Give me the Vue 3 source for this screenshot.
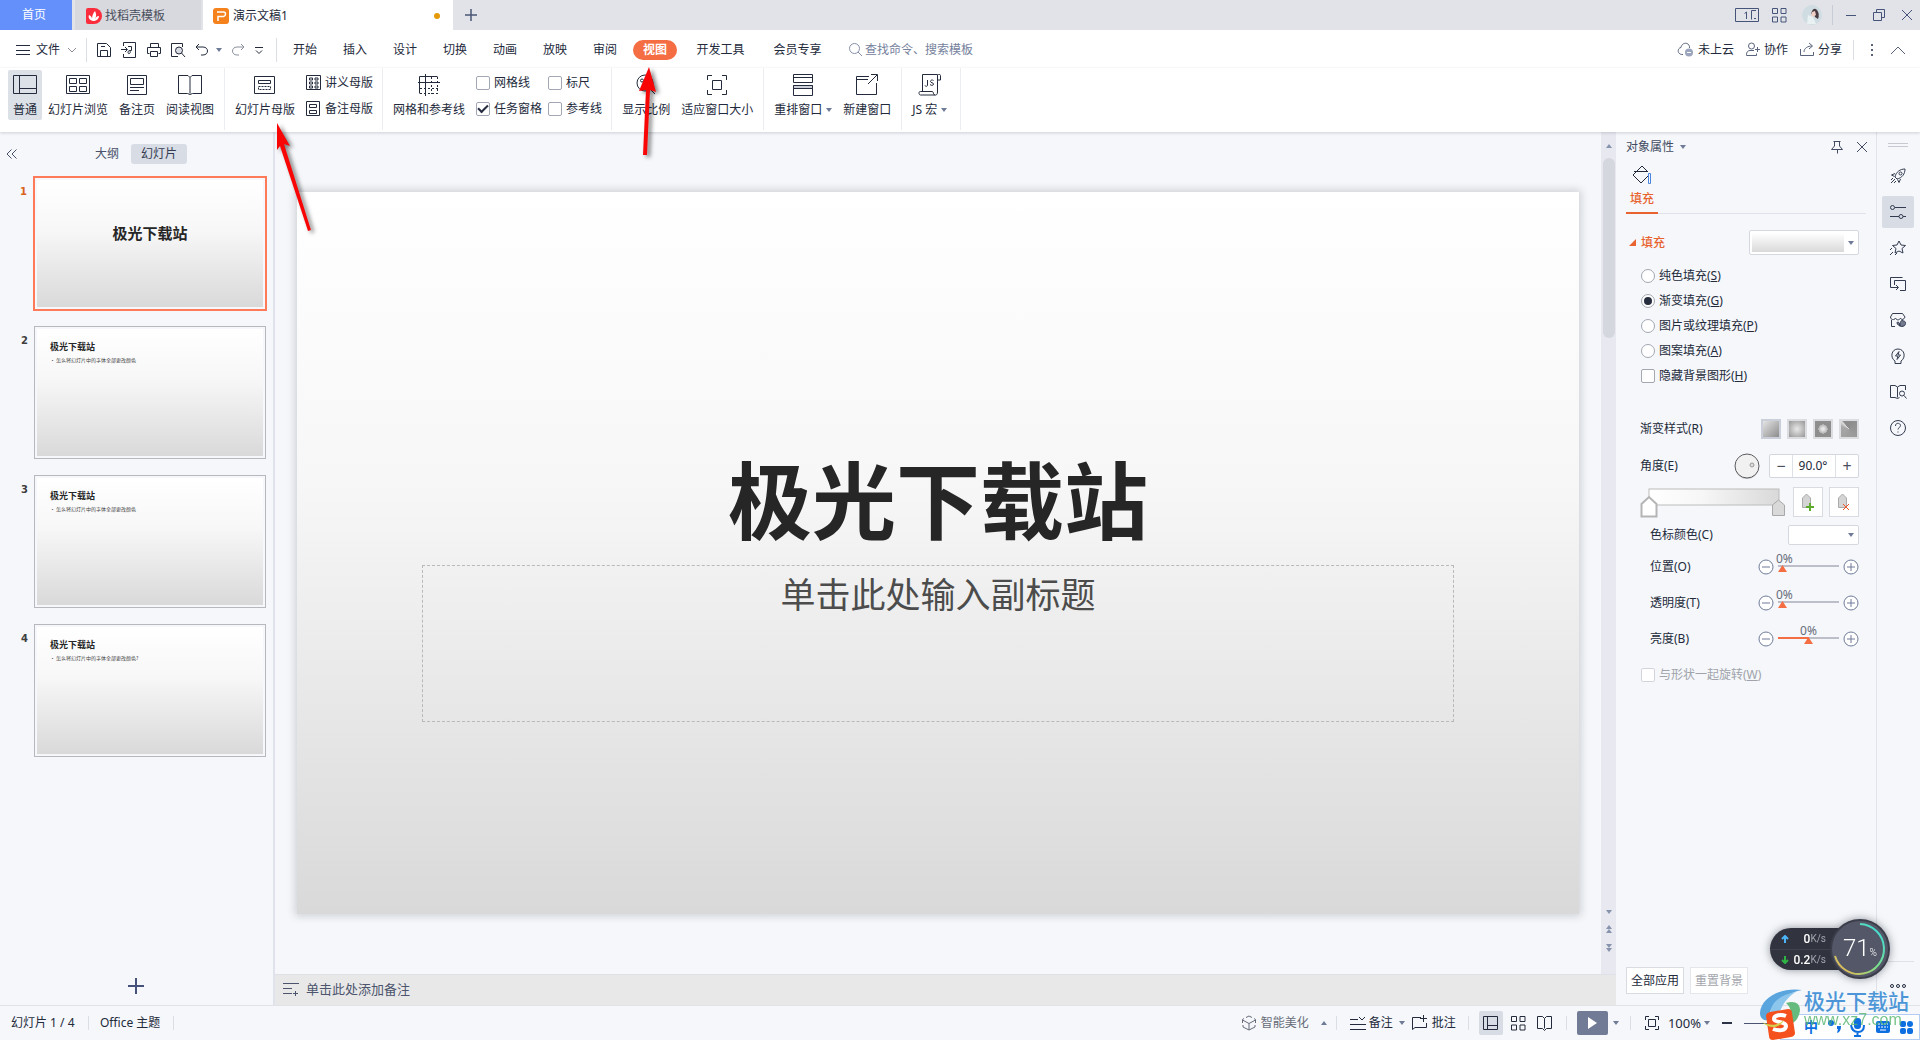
<script setup>
import { h, ref } from 'vue'

const shapes = {
  menu: [16, 12, '<path d="M1 1.5h14M1 6.5h14M1 10.5h14"/>'],
  chevron: [10, 8, '<path d="M1 2l4 4 4-4"/>'],
  save: [16, 16, '<path d="M1.500 1.500h9l4 4v9h-13zM4.500 14V8.500h7V14M5 4.500h4"/>'],
  exportPdf: [18, 16, '<path d="M3.500 4V.5h12v15h-12V12M1 7.500h6M5 5l2.500 2.500L5 10M8 4.500h3.500v4H9.500c-2 0-2 4 0 3 1-.5 1-2 0-3"/>'],
  print: [16, 16, '<path d="M4.500 5V1.500h8V5M3.500 11.500h-2v-6h13v6h-2M4.500 9.500h7v5h-7z"/>'],
  preview: [16, 16, '<path d="M8 14.500H1.500v-13h11V5"/><circle cx="9" cy="8.500" r="3.500" fill="#d9dce3"/><path d="M11.500 11l3.500 4"/>'],
  undo: [16, 14, '<path d="M5 1L2 4l3 3M2 4h7c6 0 6 8 0 8H7"/>'],
  redo: [16, 14, '<path d="M11 1l3 3-3 3M14 4H7C1 4 1 12 7 12h2"/>'],
  more: [10, 10, '<path d="M1 2.500h8M2 5.500l3 3 3-3"/>'],
  search: [15, 15, '<circle cx="6.500" cy="6.500" r="5"/><path d="M10 10l4 4"/>'],
  normal: [24, 20, '<path d="M.5.5h23v18H.5zM6.500.5v18M6.500 13.500h17"/>'],
  sorter: [24, 20, '<path d="M.5.5h23v18H.5zM3.500 3.500h7v5h-7zM13.500 3.500h7v5h-7zM3.500 11.500h7v5h-7zM13.500 11.500h7v5h-7z"/>'],
  notesPage: [20, 20, '<path d="M.5.5h19v19H.5zM3.500 3.500h13v6h-13zM3 12.500h14M3 15.500h9"/>'],
  reading: [24, 20, '<path d="M12 18.500V2.500L10 .5H.5v18h9l2.500 1 2.500-1h9V.5H14l-2 2"/>'],
  master: [22, 20, '<path d="M.5 1.500h20v17H.5zM4.500 5.500h12v3h-12z"/><path stroke-dasharray="2 1" d="M4.500 11.500h12v3h-12z"/>'],
  handout: [16, 16, '<path d="M.5.5h14v14H.5zM3.500 3h3v2h-3zM9 3h3v2H9zM3.500 7h3v2h-3zM9 7h3v2H9zM3.500 11h3v2h-3zM9 11h3v2H9z"/>'],
  notesMaster: [16, 16, '<path d="M.5.5h13v14H.5zM3.500 3.500h7v3h-7zM3.500 9.500h7v3h-7z"/>'],
  grid: [24, 22, '<path d="M1 8.500h22M8.500 0v22M2.500 19.500v-17h18"/><path stroke-dasharray="2 2" d="M14.500 3v17M20.500 3v17M3 14.500h18M3 19.500h18"/>'],
  zoom: [22, 22, '<circle cx="10" cy="9" r="8"/><path d="M15 15l5 5M13 5L7 13"/><circle cx="7" cy="6.500" r="1.500"/><circle cx="13" cy="11.500" r="1.500"/>'],
  fit: [20, 20, '<path d="M.5 5V.5H5M15 .5h4.500V5M19.500 15v4.500H15M5 19.500H.5V15M5.500 5.500h9v9h-9z"/>'],
  arrange: [22, 22, '<path d="M1.500.5h19v8h-19zM1.500 3.500h19M1.500 11.500h19v10h-19z"/><path fill="#ccd0d8" d="M1.500 11.500h19v3h-19z"/>'],
  newWin: [22, 22, '<path d="M13 2.500H.5v18h20V9M1 5.500h11M12 10l9-9M15 .5h6.500V7"/>'],
  js: [24, 22, '<path d="M4.500 17V.5h15a2 2 0 013 1V6h-3M19.500 1v17c0 4-3 3-3 3h-14c-2 0-2-4 0-3.500h12c1 0 .5 3.500 2.500 3.500M9.500 6v5.500c0 1-2.500 1-2.500 0M15.500 6.500c-1-1-3-.5-3 1s3 1 3 2.500-2 2-3.500.5"/>'],
  boxes: [24, 14, '<path d="M.5.5h23v13H.5z"/><path d="M11.500 11V4L9.500 5.500M21 2.500h-4.500v9M19 10.500h2"/>'],
  apps: [15, 15, '<path d="M.5.5h5v5h-5zM9 .5h5v5H9zM.5 9h5v5h-5zM9 9h5v5H9z"/>'],
  minimize: [12, 12, '<path d="M1 6.500h10"/>'],
  restore: [14, 14, '<path d="M1.500 4.500h8v8h-8zM4.500 4V1.500h8v8H10"/>'],
  close: [12, 12, '<path d="M1 1l10 10M11 1L1 11"/>'],
  cloud: [18, 16, '<path d="M6 12.500C0 13 0 6 4 5.500 5-.5 13 0 12.500 6"/><circle cx="12" cy="10.500" r="4" fill="#9aa5bd" stroke="none"/><path stroke="#fff" d="M10 10.500h4"/>'],
  collab: [16, 15, '<circle cx="6.500" cy="4" r="3"/><path d="M9 8.500H5c-4 0-3.500 5-3.500 5h10v-2M12.500 5v5M10 7.500h5"/>'],
  share: [16, 15, '<path d="M1.500 7v6.500h13V10M5 10c0-4 4-6 8-6M10 1l3.500 3L10 7"/>'],
  up: [16, 10, '<path d="M1 9l7-7 7 7"/>'],
  pin: [14, 14, '<path d="M3.500 1.500h7M4.500 2v4L1.500 9.500h11L9.500 6V2M7.500 10v3.500"/>'],
  bucket: [20, 20, '<path d="M10 1L1 10l8 8 7-7M10 1l6 6M2 6.500h13"/><path stroke="#4a84dc" d="M16.500 8.500h2v10h-2z"/>'],
  collapse: [12, 12, '<path d="M5.500 1.500L1 6l4.500 4.500M10.500 1.500L6 6l4.500 4.500"/>'],
  rocket: [16, 16, '<path d="M5 9C6 4 10 1 15 1c0 5-3 9-8 10zM5 5.500L1.500 7l3 1.500M10.500 11L9 14.500l-1.500-3M1 12l2-2M1 15l4-4M4 15l2-2"/><circle cx="10.500" cy="5.500" r="1.500"/>'],
  sliders: [18, 14, '<path d="M6 2.500h11M1 11.500h9M14 11.500h3"/><circle cx="3.500" cy="2.500" r="2"/><circle cx="12" cy="11.500" r="2"/>'],
  star: [18, 16, '<path d="M10 1l2 4 4.500.5-3.500 3 1 4.500-4-2-4 2 1-4.500-3.500-3L8 5zM1 10l2-2M1 15l3-3M6 15l2-2"/>'],
  swap: [18, 16, '<path d="M4 11.500H1.500v-10h12M5.500 9V4.500h11v10H11M3 11.500h6M7 9l2.500 2.500L7 14"/>'],
  shop: [18, 16, '<path d="M6 14.500H2.500V8M1.500 5l2-3.500h10L16 5c-1 3-4 3-4.500 1-1 2.500-4 2.500-5 0-1 2.500-5 2-5-1z"/><path d="M8 11c0-2 3-1 3 3 0-4 1-6 3-6-1 2 3 0 2.500 3.500 0 4-7 4-8.500-.5z" fill="#727b90"/>'],
  bulb: [16, 17, '<path d="M5 13C0 10 1 1 8 1s8 9 3 12v2.500H5zM9 3.500L5.500 8H8l-1 3.500L10.500 7H8z"/>'],
  lookup: [18, 16, '<path d="M8.500 13.500V3L6 1.500H1.500v12H6l2.500 1 2-1M8.500 3L11 1.500h5.500V6"/><circle cx="13" cy="9.500" r="2.500"/><path d="M15 11.500l2.500 3"/>'],
  help: [18, 18, '<circle cx="9" cy="9" r="7.500"/><path d="M6.500 7c0-4 5-3 5-.5 0 2-2.500 2-2.500 4M9 12.500v1"/>'],
  dots: [18, 6, '<circle cx="3" cy="3" r="1.500"/><circle cx="9" cy="3" r="1.500"/><circle cx="15" cy="3" r="1.500"/>'],
  addNote: [18, 14, '<path d="M1 1.500h16M1 6.500h9M1 11.500h9M13.500 9v5M11 11.500h5"/>'],
  cube: [16, 16, '<path d="M8 1L5 2.500M11 2.500L8 1M1.500 8V4.500L3 3.500M14.500 8V4.500L13 3.500M1.500 5L8 8.500 14.500 5M8 8.500V15l-6-3v-2M8 15l6-3v-2"/>'],
  notes: [18, 14, '<path d="M1 3.500h8M1 8.500h16M1 13.500h16M10 1l3 3 3-3"/>'],
  comment: [17, 16, '<path d="M10 2.500H1.500v12L4 12.500h11.500V8M12.500 0v7M9 3.500h7"/>'],
  vNormal: [16, 14, '<path d="M.5.5h14v13H.5zM4.500.5v13M4.500 9.500h10"/>'],
  vBook: [16, 15, '<path d="M7.500 12.500V2.500L5.500.5h-5v12h5l2 2 2-2h5V.5h-5l-2 2"/>'],
  vFit: [15, 15, '<path d="M.5 4V.5H4M10 .5h3.500V4M13.500 10v3.500H10M4 13.500H.5V10M3.500 3.500h7v7h-7z"/>'],
  add: [16, 16, '<path stroke-width="2" d="M0 8h16M8 0v16"/>'],
  stopAdd: [14, 18, '<path fill="#d4d4d4" stroke="#aaa" d="M1.500 14.500V5L5.500 1l4 4v9.500z"/><path stroke="#5cab2c" stroke-width="2" d="M5 14h8M9 10v8"/>'],
  stopDel: [14, 18, '<path fill="#d4d4d4" stroke="#aaa" d="M1.500 14.500V5L5.500 1l4 4v9.500z"/><path stroke="#f0562c" d="M6 11l6 6M12 11l-6 6"/>'],
  leaf: [16, 16, '<path fill="#fb2c3c" stroke="none" d="M0 2q0-2 2-2h6a8 8 0 010 16H2q-2 0-2-2z"/><path fill="#fff" stroke="none" d="M7 13C3 12 2 9 3 7c2 1 3 2 3 4C6 8 7 5 9 3c2 4 1 6 0 8 1-2 2-3 4-3 0 3-3 5-6 5z"/>'],
  ppt: [16, 16, '<rect width="16" height="16" rx="3" fill="#f5821c" stroke="none"/><path stroke="#fff" stroke-width="1.500" d="M4 4h6.500q2 0 2 2t-2 2.500H5V13"/>'],
}

const Ico = (props) => {
  const [w, ht, body] = shapes[props.n]
  return h('svg', { width: w, height: ht, viewBox: `0 0 ${w} ${ht}`, fill: 'none', stroke: 'currentColor', 'aria-hidden': 'true', innerHTML: body })
}
Ico.props = ['n']

const tabsA = ['开始', '插入', '设计', '切换', '动画', '放映', '审阅', '视图']
const tabsB = ['开发工具', '会员专享']
const quick = ['save', 'exportPdf', 'print', 'preview']
const views = [['normal', '普通'], ['sorter', '幻灯片浏览'], ['notesPage', '备注页'], ['reading', '阅读视图']]
const shows = ref([
  { t: '网格线', on: false }, { t: '标尺', on: false },
  { t: '任务窗格', on: true }, { t: '参考线', on: false },
])
const slides = [
  { title: '极光下载站', cover: true },
  { title: '极光下载站', body: '怎么将幻灯片中的字体全部更改颜色' },
  { title: '极光下载站', body: '怎么将幻灯片中的字体全部更改颜色' },
  { title: '极光下载站', body: '怎么将幻灯片中的字体全部更改颜色?' },
]
const fills = [['纯色填充', 'S'], ['渐变填充', 'G'], ['图片或纹理填充', 'P'], ['图案填充', 'A']]
const fill = ref('G')
const sliders = ref([
  { id: 'pos', t: '位置(O)', v: 0, min: 0 },
  { id: 'alpha', t: '透明度(T)', v: 0, min: 0 },
  { id: 'light', t: '亮度(B)', v: 0, min: -100 },
])
const tools = ['rocket', 'sliders', 'star', 'swap', 'shop', 'bulb', 'lookup', 'help']
</script>

<template>
  <div class="app">
    <header class="titlebar">
      <button class="home">首页</button>
      <button class="doc doc-store"><Ico n="leaf" />找稻壳模板</button>
      <button class="doc doc-active"><Ico n="ppt" />演示文稿1<i class="unsaved"></i></button>
      <button class="newtab" aria-label="新建"><Ico n="add" /></button>
      <div class="win">
        <button><Ico n="boxes" /></button>
        <button><Ico n="apps" /></button>
        <svg class="avatar" width="20" height="20" viewBox="0 0 20 20"><circle cx="10" cy="10" r="10" fill="#cfdde2" /><path d="M10 6q2-4 5-1 3 4 1 9l-3-2-1-3-3 0z" fill="#4a3a42" /><path d="M10 7l3-1 1 4-3 2-2-2z" fill="#f0cfc6" /><path d="M6 10l5 2 3 7H5z" fill="#e9f1f3" /></svg>
        <i class="vline"></i>
        <button><Ico n="minimize" /></button>
        <button><Ico n="restore" /></button>
        <button><Ico n="close" /></button>
      </div>
    </header>

    <nav class="menubar">
      <button class="file"><Ico n="menu" />文件<Ico n="chevron" class="muted" /></button>
      <i class="vline"></i>
      <div class="quick">
        <button v-for="q in quick" :key="q"><Ico :n="q" /></button>
        <button class="undo"><Ico n="undo" /><i class="caret"></i></button>
        <button class="muted"><Ico n="redo" /></button>
        <button><Ico n="more" /></button>
      </div>
      <i class="vline"></i>
      <div class="tabs">
        <button v-for="t in tabsA" :key="t" class="tab" :class="{ current: t === '视图' }"><span>{{ t }}</span></button>
        <button v-for="t in tabsB" :key="t" class="tab wide"><span>{{ t }}</span></button>
      </div>
      <label class="search"><Ico n="search" /><input type="text" placeholder="查找命令、搜索模板" aria-label="查找命令" /></label>
      <div class="account">
        <button><Ico n="cloud" />未上云</button>
        <button><Ico n="collab" />协作</button>
        <button><Ico n="share" />分享</button>
        <i class="vline"></i>
        <button class="kebab" aria-label="更多"><i></i><i></i><i></i></button>
        <button class="muted"><Ico n="up" /></button>
      </div>
    </nav>

    <section class="ribbon">
      <div class="group first">
        <button v-for="([i, t], k) in views" :key="t" class="big" :class="{ pressed: k === 0 }"><Ico :n="i" /><span>{{ t }}</span></button>
      </div>
      <div class="group">
        <button class="big"><Ico n="master" /><span>幻灯片母版</span></button>
        <div class="stack">
          <button><Ico n="handout" />讲义母版</button>
          <button><Ico n="notesMaster" />备注母版</button>
        </div>
      </div>
      <div class="group">
        <button class="big"><Ico n="grid" /><span>网格和参考线</span></button>
        <div class="checks">
          <label v-for="s in shows" :key="s.t"><input v-model="s.on" type="checkbox" />{{ s.t }}</label>
        </div>
      </div>
      <div class="group">
        <button class="big"><Ico n="zoom" /><span>显示比例</span></button>
        <button class="big"><Ico n="fit" /><span>适应窗口大小</span></button>
      </div>
      <div class="group">
        <button class="big"><Ico n="arrange" /><span>重排窗口<i class="caret"></i></span></button>
        <button class="big"><Ico n="newWin" /><span>新建窗口</span></button>
      </div>
      <div class="group last">
        <button class="big"><Ico n="js" /><span>JS 宏<i class="caret"></i></span></button>
      </div>
    </section>

    <main class="work">
      <aside class="outline">
        <div class="outline-head">
          <button class="fold" aria-label="收起"><Ico n="collapse" /></button>
          <button class="seg">大纲</button>
          <button class="seg on">幻灯片</button>
        </div>
        <ol class="thumbs">
          <li v-for="(s, i) in slides" :key="i" :class="{ sel: i === 0 }">
            <span class="num">{{ i + 1 }}</span>
            <div class="frame">
              <div class="paper" :class="{ cover: s.cover }">
                <b>{{ s.title }}</b>
                <p v-if="s.body">• {{ s.body }}</p>
              </div>
            </div>
          </li>
        </ol>
        <button class="add" aria-label="新建幻灯片"><Ico n="add" /></button>
      </aside>

      <section class="editor">
        <div class="stage">
          <div class="canvas">
            <article class="slide">
              <h1>极光下载站</h1>
              <div class="subtitle">单击此处输入副标题</div>
            </article>
          </div>
          <div class="scroll">
            <i class="caret upward"></i>
            <div class="bar"></div>
            <div class="jumps">
              <i class="caret"></i>
              <div><i class="caret upward"></i><i class="caret upward"></i></div>
              <div><i class="caret"></i><i class="caret"></i></div>
            </div>
          </div>
        </div>
        <button class="notes"><Ico n="addNote" />单击此处添加备注</button>
      </section>

      <aside class="props">
        <div class="props-head">
          <span>对象属性</span><i class="caret"></i>
          <button class="pin" aria-label="固定"><Ico n="pin" /></button>
          <button aria-label="关闭"><Ico n="close" /></button>
        </div>
        <div class="props-tabs">
          <button><Ico n="bucket" /><span>填充</span></button>
        </div>
        <div class="props-body">
          <div class="fill-head">
            <i class="tri"></i><label for="preset">填充</label>
            <div class="pick preset"><select id="preset"></select><i class="caret"></i></div>
          </div>
          <div class="options">
            <label v-for="[t, k] in fills" :key="k"><input v-model="fill" type="radio" name="fill" :value="k" /><span>{{ t }}(<u>{{ k }}</u>)</span></label>
            <label><input type="checkbox" /><span>隐藏背景图形(<u>H</u>)</span></label>
          </div>
          <div class="row styles">
            <span>渐变样式(R)</span>
            <div class="swatches">
              <button class="sw linear" aria-label="线性"></button>
              <button class="sw radial" aria-label="射线"></button>
              <button class="sw rect" aria-label="矩形"></button>
              <button class="sw path" aria-label="路径"></button>
            </div>
          </div>
          <div class="row angle">
            <label for="angle">角度(E)</label>
            <svg width="28" height="28" viewBox="0 0 28 28"><circle cx="14" cy="15" r="12" fill="#c9c9cb" /><circle cx="14" cy="14" r="12" fill="#f1f1f2" stroke="#5c5c60" /><circle cx="19" cy="13" r="2" fill="#ddd" stroke="#999" /></svg>
            <div class="spin"><button>−</button><input id="angle" type="text" value="90.0°" /><button>+</button></div>
          </div>
          <div class="stops">
            <svg width="146" height="32" viewBox="0 0 146 32">
              <defs><linearGradient id="ramp"><stop offset="0" stop-color="#fff" /><stop offset=".4" stop-color="#f7f7f7" /><stop offset="1" stop-color="#d9d9d9" /></linearGradient></defs>
              <rect x="9" y="2" width="130" height="16" fill="url(#ramp)" stroke="#bcbcbc" />
              <path d="M1.500 29.500V17L9 10l7.500 7v12.500z" fill="#fff" stroke="#b5b5b5" stroke-width="2" />
              <path d="M132.500 28.500V18l6-5 6 5v10.500z" fill="#d9d9d9" stroke="#a8a8a8" />
            </svg>
            <button aria-label="增加渐变光圈"><Ico n="stopAdd" /></button>
            <button aria-label="删除渐变光圈"><Ico n="stopDel" /></button>
          </div>
          <div class="row inset stop-color">
            <label for="stopColor">色标颜色(C)</label>
            <div class="pick color"><select id="stopColor"></select><i class="caret"></i></div>
          </div>
          <div v-for="s in sliders" :key="s.id" class="row inset slider">
            <label :for="s.id">{{ s.t }}</label>
            <button class="round" aria-label="减少"><svg width="16" height="16" viewBox="0 0 16 16"><circle cx="8" cy="8" r="7" /><path d="M4 8h8" /></svg></button>
            <div class="track" :class="{ mid: s.min < 0 }">
              <output :for="s.id">{{ s.v }}%</output>
              <input :id="s.id" v-model="s.v" type="range" :min="s.min" max="100" />
            </div>
            <button class="round" aria-label="增加"><svg width="16" height="16" viewBox="0 0 16 16"><circle cx="8" cy="8" r="7" /><path d="M4 8h8M8 4v8" /></svg></button>
          </div>
          <div class="options rotate">
            <label><input type="checkbox" disabled /><span>与形状一起旋转(<u>W</u>)</span></label>
          </div>
          <div class="actions">
            <button>全部应用</button>
            <button disabled>重置背景</button>
          </div>
        </div>
      </aside>

      <aside class="rail">
        <i class="grip"></i>
        <button v-for="t in tools" :key="t" :class="{ on: t === 'sliders' }"><Ico :n="t" /></button>
        <div class="rail-end"><Ico n="dots" /></div>
      </aside>
    </main>

    <footer class="status">
      <span class="page">幻灯片 1 / 4</span><i class="vline"></i>
      <span class="theme">Office 主题</span><i class="vline"></i>
      <div class="status-right">
        <button class="beautify"><Ico n="cube" />智能美化<i class="caret upward"></i></button>
        <i class="vline"></i>
        <button class="b-notes"><Ico n="notes" />备注<i class="caret"></i></button>
        <button class="b-comment"><Ico n="comment" />批注</button>
        <i class="vline"></i>
        <div class="modes">
          <button class="on"><Ico n="vNormal" /></button>
          <button><Ico n="apps" /></button>
          <button><Ico n="vBook" /></button>
        </div>
        <i class="vline"></i>
        <button class="play" aria-label="放映"><i></i></button><i class="caret play-more"></i>
        <i class="vline"></i>
        <button class="level"><Ico n="vFit" />100%<i class="caret"></i></button>
        <button class="less" aria-label="缩小"></button>
        <i class="zoomline"></i>
      </div>
    </footer>

    <svg class="arrows" width="400" height="200" viewBox="0 0 400 200" aria-hidden="true">
      <g fill="#f80606">
        <path d="M369 7l7 25-6-2-3 65h-4l3-65-7 1z" />
        <path d="M-3 63l13 23-6-2 27 86-3 1L0 86l-3 4z" />
      </g>
    </svg>

    <div class="speed">
      <div class="rates">
        <p><svg width="8" height="8" viewBox="0 0 8 8"><path d="M4 8V1M1 4l3-3 3 3" stroke="#4db4f8" stroke-width="2" fill="none" /></svg><b>0</b><small>K/s</small></p>
        <p><svg width="8" height="8" viewBox="0 0 8 8"><path d="M4 0v7M1 4l3 3 3-3" stroke="#2fb344" stroke-width="2" fill="none" /></svg><b>0.2</b><small>K/s</small></p>
      </div>
      <div class="dial">
        <svg width="60" height="60" viewBox="0 0 60 60">
          <defs><linearGradient id="dialArc" x1="1" y1="0" x2="0" y2="1"><stop offset="0" stop-color="#35d9e6" /><stop offset=".5" stop-color="#7be08c" /><stop offset="1" stop-color="#fdb04a" /></linearGradient></defs>
          <circle cx="30" cy="30" r="29" fill="#535767" stroke="#3b3e4a" stroke-width="2" />
          <path d="M30 5A25 25 0 115 37" fill="none" stroke="url(#dialArc)" stroke-width="2" />
        </svg>
        <span>71<small>%</small></span>
      </div>
    </div>

    <div class="ime">
      <b>中</b>
      <svg width="96" height="24" viewBox="0 0 96 24" fill="#0d6fe0">
        <circle cx="9" cy="8" r="3" /><path d="M15 11h4q0 6-4 7l1-4h-1z" />
        <rect x="32" y="3" width="7" height="11" rx="3" /><path d="M29 10q1 7 7 7t6-7M35.500 17v4M32 21h7" fill="none" stroke="#0d6fe0" stroke-width="2" />
        <rect x="54" y="6" width="14" height="12" rx="2" /><path d="M56 9h10M56 12h10" stroke="#fff" stroke-dasharray="2 1" /><path d="M58 15h6" stroke="#fff" />
        <rect x="78" y="6" width="6" height="6" rx="2" /><circle cx="88" cy="9" r="3" /><rect x="78" y="13" width="6" height="6" rx="2" /><rect x="85" y="13" width="6" height="6" rx="2" />
      </svg>
    </div>
    <div class="mark">
      <svg width="46" height="52" viewBox="0 0 46 52">
        <path d="M44 2C24-1 3 9 2 25c0 6 5 9 10 6C8 20 25 6 44 2z" fill="#5aa5dd" />
        <path d="M38 4C20 7 11 17 12 29c5-1 9-4 11-8 3-7 8-13 15-17z" fill="#8cc6ec" />
        <path d="M28 15c12-4 18 4 11 16-4 6-15 9-22 5 10-1 22-12 11-21z" fill="#64bb7d" />
        <path d="M8 28q0-3 4-4l18-3q4 0 4 4l3 20q0 3-4 4l-18 3q-4 0-4-4z" fill="#f4511e" />
        <path d="M28 28c-5-2-12-1-12 3s12 2 12 7-8 5-13 3" fill="none" stroke="#fff" stroke-width="4" />
        <path d="M4 34c8 4 15 4 22-2-4 8-14 10-22 2z" fill="#d3cf4d" />
      </svg>
      <div class="mark-text"><strong>极光下载站</strong><span>www.xz7.com</span></div>
    </div>
  </div>
</template>

<style>
body { margin: 0; background: #f5f7fa; }
</style>

<style scoped>
* { box-sizing: border-box; }
.app {
  position: relative; display: flex; flex-direction: column; min-height: 100vh; overflow: hidden;
  font: 12px/16px "Noto Sans", "Noto Sans CJK SC", sans-serif; color: #232a3b; background: #f5f7fa;
}
button, input, select { font: inherit; color: inherit; margin: 0; }
button { display: flex; align-items: center; padding: 0; border: 0; background: none; white-space: nowrap; }
svg { display: block; flex: none; }
.caret { flex: none; width: 0; height: 0; border: 3px solid transparent; border-top: 4px solid #6f7b96; border-bottom: 0; }
.caret.upward { border-top: 0; border-bottom: 4px solid #6f7b96; }
.vline { flex: none; width: 1px; height: 24px; background: #dcdee6; }
.muted { color: #8b909c; }

.titlebar { display: flex; height: 30px; background: #e2e3e8; }
.home { width: 72px; padding-right: 4px; justify-content: center; color: #fff; background: #6490fb; }
.doc { height: 30px; padding-top: 1px; }
.doc-store { width: 126px; margin-left: 3px; padding-left: 11px; gap: 3px; color: #4a4f5c; background: #d8d9de; }
.doc-active { width: 250px; margin-left: 2px; padding-left: 10px; gap: 4px; background: #fff; }
.unsaved { width: 6px; height: 6px; margin: 0 13px 0 auto; border-radius: 50%; background: #e59a0a; }
.newtab { margin-left: 12px; color: #4b5775; }
.newtab svg { width: 12px; height: 12px; }
.win { display: flex; align-items: center; margin-left: auto; padding-right: 7px; color: #46547a; }
.win button { margin-right: 13px; }
.win .avatar { margin: 0 10px 0 2px; }
.win .vline { height: 20px; margin-right: 12px; background: #c9ccd6; }
.win button:nth-of-type(3) { margin-right: 15px; }
.win button:nth-of-type(4) { margin-right: 15px; }
.win button:last-child { margin: 0; }

.menubar { display: flex; align-items: center; height: 38px; padding-top: 1px; background: #fff; }
.file { width: 86px; padding-left: 15px; gap: 5px; }
.file svg:last-child { margin-left: 2px; }
.quick { display: flex; align-items: center; gap: 8px; width: 189px; padding-left: 9px; }
.quick .undo { gap: 6px; }
.tabs { display: flex; padding-left: 3px; }
.tab { width: 50px; justify-content: center; }
.tab.wide { width: 77px; }
.tab.wide:nth-child(9) { margin-left: 2px; }
.current span { padding: 2px 10px; border-radius: 10px; color: #fff; font-weight: 700; background: #f56e43; }
.search { display: flex; align-items: center; gap: 2px; margin-left: 12px; color: #8490aa; }
.search input { width: 120px; padding: 0; border: 0; outline: 0; background: none; }
.search input::placeholder { color: #75819c; opacity: 1; }
.account { display: flex; align-items: center; gap: 11px; margin-left: auto; padding-right: 14px; }
.account button { gap: 3px; }
.account .vline { height: 20px; }
.account svg { color: #59637c; }
.kebab { flex-direction: column; width: 14px; }
.kebab i { width: 2px; height: 2px; background: #59637c; }

.ribbon { display: flex; height: 64px; background: #fff; box-shadow: 0 1px 3px rgba(40, 50, 70, .2); position: relative; }
.group { display: flex; gap: 1px; height: 62px; padding: 2px 5px 0; border-right: 1px solid #ebedf1; }
.group.first { padding-left: 8px; }
.group.last { width: 59px; }
.big { flex-direction: column; justify-content: space-between; height: 50px; padding: 4px 5px 2px; border-radius: 2px; }
.big svg { height: 22px; }
.big span { display: flex; align-items: center; gap: 4px; }
.pressed { background: #dce1e8; }
.stack { display: flex; flex-direction: column; gap: 10px; padding: 5px 4px 0 5px; }
.stack button { gap: 3px; }
.checks { display: grid; grid-template-columns: 72px auto; gap: 10px 0; align-content: start; padding: 5px 4px 0 5px; }
.checks label { display: flex; align-items: center; gap: 4px; white-space: nowrap; }
input[type="checkbox"], input[type="radio"] { appearance: none; flex: none; display: grid; place-items: center; width: 14px; height: 14px; border: 1px solid #a2a7b3; border-radius: 2px; background: #fff; }
input[type="radio"] { border-radius: 50%; }
input[type="radio"]:checked::after { content: ""; width: 8px; height: 8px; border-radius: 50%; background: #262d3f; }
input[type="checkbox"]:checked::after { content: ""; width: 8px; height: 4px; border: solid #262d3f; border-width: 0 0 2px 2px; transform: rotate(-45deg) translate(1px, -1px); }
input:disabled { border-color: #d2d5db; }

.work { flex: 1; display: flex; min-height: 0; }
.outline { display: flex; flex-direction: column; width: 275px; border-right: 2px solid #e1e3ec; color: #49516a; }
.outline-head { display: flex; align-items: center; height: 44px; padding: 0 0 1px 6px; }
.fold { width: 77px; }
.seg { width: 48px; height: 20px; justify-content: center; border-radius: 3px; }
.seg.on { width: 56px; color: #333b50; background: #d8dce5; }
.thumbs { display: flex; flex-direction: column; gap: 16px; margin: 0; padding: 1px 7px 0 0; list-style: none; }
.thumbs li { display: flex; justify-content: flex-end; }
.num { width: 10px; padding-top: 8px; font: 700 10px/14px "DejaVu Sans", sans-serif; color: #3e3e3e; }
.frame { width: 232px; height: 133px; margin-left: 3px; padding: 2px; border: 1px solid #b6b8bd; }
.paper { height: 100%; padding: 12px 13px; background: linear-gradient(#fff, #f7f7f7 40%, #d9d9d9); color: #262626; }
.paper b { display: block; font: 700 9px/12px "Noto Sans CJK SC", sans-serif; }
.paper p { margin: 4px 0 0; font: 5px/6px "Noto Sans CJK SC", sans-serif; color: #444; white-space: nowrap; }
.paper.cover { padding-top: 43px; text-align: center; }
.cover b { font-size: 15px; line-height: 20px; }
.sel { margin: -1px -1px -1px 0; }
.sel .num { padding-top: 9px; color: #d9621c; }
.sel .frame { width: 234px; height: 135px; border: 2px solid #ff7a59; }
.add { justify-content: center; margin: auto 0 11px; padding-right: 2px; color: #46527a; }

.editor { flex: 1; display: flex; flex-direction: column; min-width: 0; }
.stage { flex: 1; display: flex; }
.canvas { flex: 1; display: flex; align-items: center; padding: 0 22px; }
.slide { width: 100%; aspect-ratio: 1282 / 722; background: linear-gradient(#fff, #f7f7f7 40%, #d9d9d9); box-shadow: 0 0 8px 2px rgba(50, 55, 70, .2); text-align: center; font-family: "Noto Sans CJK SC", sans-serif; }
.slide h1 { margin: 255px 0 0; font-size: 84px; line-height: 100px; font-weight: 700; color: #262626; }
.subtitle { width: calc(100% - 250px); height: 157px; margin: 18px auto 0; padding-top: 3px; border: 1px dashed #b9b9b9; font-size: 35px; line-height: 48px; color: #4c4c4c; }
.scroll { display: flex; flex-direction: column; align-items: center; width: 15px; padding: 12px 0 22px; background: #e8e9f0; }
.scroll .caret { border-top-color: #8793ad; border-bottom-color: #8793ad; }
.bar { width: 12px; height: 180px; margin-top: 10px; border-radius: 6px; background: #d5d7df; }
.jumps { display: flex; flex-direction: column; align-items: center; gap: 11px; margin-top: auto; }
.jumps div { display: flex; flex-direction: column; }
.notes { height: 31px; gap: 6px; padding: 0 0 3px 7px; border-top: 1px solid #e0e1e6; color: #4c556d; background: #e8e8e8; font-size: 13px; }

.props { display: flex; flex-direction: column; width: 261px; padding: 0 8px 11px 10px; border-right: 1px solid #e1e3ea; }
.props-head { display: flex; align-items: center; gap: 6px; height: 30px; color: #424b62; }
.props-head .pin { margin: 0 6px 0 auto; }
.props-tabs { display: flex; height: 52px; margin-right: 2px; border-bottom: 1px solid #dfe2ea; }
.props-tabs button { flex-direction: column; gap: 6px; width: 32px; height: 52px; padding-top: 3px; border-bottom: 2px solid #e8632f; }
.props-tabs span, .fill-head label { color: #e8632f; font-weight: 500; }
.props-body { flex: 1; display: flex; flex-direction: column; padding-right: 9px; }
.fill-head { display: flex; align-items: center; gap: 5px; height: 25px; margin: 16px 0 0 3px; }
.tri { width: 0; height: 0; border-left: 7px solid transparent; border-bottom: 7px solid #e8632f; }
.pick { position: relative; margin-left: auto; }
.pick select { appearance: none; display: block; width: 100%; height: 100%; border: 1px solid #d5d8e0; border-radius: 2px; background: #fff; }
.pick .caret { position: absolute; right: 5px; top: 50%; margin-top: -2px; }
.preset { width: 110px; height: 25px; }
.preset select { background: linear-gradient(#fff, #d9d9d9) content-box no-repeat, #fff; padding: 2px 14px 2px 2px; }
.color { width: 71px; height: 20px; }
.options { display: flex; flex-direction: column; gap: 9px; margin: 13px 0 0 15px; }
.options label { display: flex; align-items: center; gap: 4px; }
.row { display: flex; align-items: center; margin-left: 14px; }
.row.inset { margin-left: 24px; }
.styles { height: 20px; margin-top: 35px; }
.swatches { display: flex; gap: 6px; margin-left: auto; }
.sw { width: 20px; height: 20px; border: 2px solid #dcdde0; }
.linear { background: linear-gradient(135deg, #e4e4e4, #8c8c8c); border-color: #cbcfda; }
.radial { background: radial-gradient(#e8e8e8, #969696); }
.rect { background: radial-gradient(#e8e8e8 10%, #b2b2b2 40%, #8e8e8e 42%); }
.path { background: conic-gradient(#8c8c8c, #a8a8a8 80%, #dedede 88%, #8c8c8c 90%); }
.angle { margin-top: 13px; }
.angle svg { margin: 0 8px 0 auto; }
.spin { display: flex; width: 90px; height: 24px; border: 1px solid #d3d6de; border-radius: 2px; background: #fff; }
.spin button { width: 22px; justify-content: center; font-size: 16px; color: #4b5060; }
.spin input { width: 44px; padding: 0 4px 0 2px; border: solid #dfe1e8; border-width: 0 1px; text-align: center; }
.stops { display: flex; gap: 6px; margin: 7px 0 0 14px; }
.stops > svg { margin-right: auto; }
.stops button { width: 30px; height: 30px; justify-content: center; border: 1px solid #d9dbe2; background: #fff; }
.stop-color { height: 28px; margin-top: 2px; }
.slider { height: 36px; }
.slider label { margin-right: auto; }
.round svg { stroke: #6f7b98; fill: #fff; }
.track { display: flex; flex-direction: column; width: 61px; height: 28px; margin: 0 4px; }
.track output { height: 12px; line-height: 12px; color: #686d7b; margin-left: -2px; }
.track.mid output { text-align: center; margin: 0; }
.track input { appearance: none; width: 100%; height: 9px; padding: 0; background: none; }
.track input::-webkit-slider-runnable-track { height: 9px; background: linear-gradient(#bcbfc9, #bcbfc9) top / 100% 2px no-repeat; }
.track.mid input::-webkit-slider-runnable-track { background: linear-gradient(90deg, #f56e43 50%, #bcbfc9 50%) top / 100% 2px no-repeat; }
.track input::-webkit-slider-thumb { appearance: none; width: 9px; height: 7px; background: #f56e43; clip-path: polygon(50% 0, 100% 100%, 0 100%); }
.rotate { margin-top: 10px; color: #a0a3ab; }
.actions { display: flex; gap: 6px; margin: auto 0 0; }
.actions button { width: 58px; height: 27px; justify-content: center; border: 1px solid #d8dbe2; background: #fff; }
.actions button:disabled { color: #a3a6ad; border-color: #e4e6eb; }

.rail { display: flex; flex-direction: column; align-items: center; gap: 4px; width: 43px; padding: 11px 2px 0 0; }
.grip { width: 20px; height: 4px; margin-bottom: 9px; border: solid #c6c9d1; border-width: 1px 0; }
.rail button { width: 32px; height: 32px; justify-content: center; border-radius: 2px; color: #333b50; }
.rail button.on { background: #d8dce5; }
.rail-end { width: 32px; margin-top: auto; padding: 21px 7px 16px; border-top: 1px solid #dfe1e8; }

.status { display: flex; align-items: center; height: 35px; padding-left: 11px; border-top: 1px solid #e0e2e8; }
.status .vline { height: 14px; }
.page { width: 77px; }
.theme { width: 84px; padding-left: 11px; }
.status-right { display: flex; align-items: center; margin-left: auto; }
.beautify { gap: 4px; width: 95px; color: #666b78; }
.beautify .caret { margin-left: 8px; }
.b-notes { gap: 2px; padding-left: 12px; }
.b-notes .caret { margin-left: 4px; }
.b-comment { gap: 4px; padding: 0 12px 0 6px; }
.modes { display: flex; padding: 0 7px 0 10px; }
.modes button { width: 24px; height: 24px; margin-right: 2px; justify-content: center; border-radius: 2px; }
.modes .on { margin-right: 4px; background: #d8dce5; }
.play { width: 31px; height: 24px; margin-left: 10px; justify-content: center; border-radius: 2px; background: #717b95; }
.play i { width: 0; height: 0; border: 6px solid transparent; border-left: 9px solid #fff; border-right: 0; }
.play-more { margin: 0 11px 0 5px; }
.level { gap: 8px; padding-left: 14px; font-size: 13px; }
.level .caret { margin-left: -5px; }
.less { width: 10px; height: 2px; margin-left: 12px; background: #2c3347; }
.zoomline { width: 176px; height: 1px; margin-left: 12px; background: #4b5470; }

.arrows { position: absolute; left: 280px; top: 60px; overflow: visible; filter: drop-shadow(3px 2px 2px rgba(0, 0, 0, .5)); pointer-events: none; }
.speed { position: absolute; right: 30px; bottom: 61px; display: flex; align-items: center; color: #fff; font-family: Roboto, sans-serif; filter: drop-shadow(0 0 4px rgba(40, 45, 60, .5)); }
.rates { width: 80px; margin-right: -20px; border-radius: 21px 0 0 21px; background: #31343e; }
.rates p { display: flex; align-items: center; height: 21px; margin: 0; padding: 0 24px 0 11px; }
.rates p + p { border-top: 1px solid #3e424d; }
.rates b { margin-left: auto; font-weight: 500; }
.rates small { font-size: 10px; color: #a3a6b0; }
.dial { position: relative; }
.dial span { position: absolute; inset: 0; display: flex; justify-content: center; align-items: baseline; font-size: 24px; line-height: 58px; font-weight: 300; }
.dial small { font-size: 10px; }
.ime { position: absolute; right: 0; bottom: 0; display: flex; align-items: center; gap: 4px; width: 140px; height: 26px; padding-left: 23px; border: 1px solid #b3cdf2; background: #fff; overflow: hidden; color: #0d6fe0; font-size: 14px; }
.mark { position: absolute; right: 11px; bottom: 0; display: flex; }
.mark-text { display: flex; flex-direction: column; color: #4c96d8; }
.mark strong { font: 500 21px/24px "Noto Sans CJK SC", sans-serif; }
.mark span { font: 16px/16px "Liberation Sans", sans-serif; color: #55b56f; opacity: .8; }
</style>
